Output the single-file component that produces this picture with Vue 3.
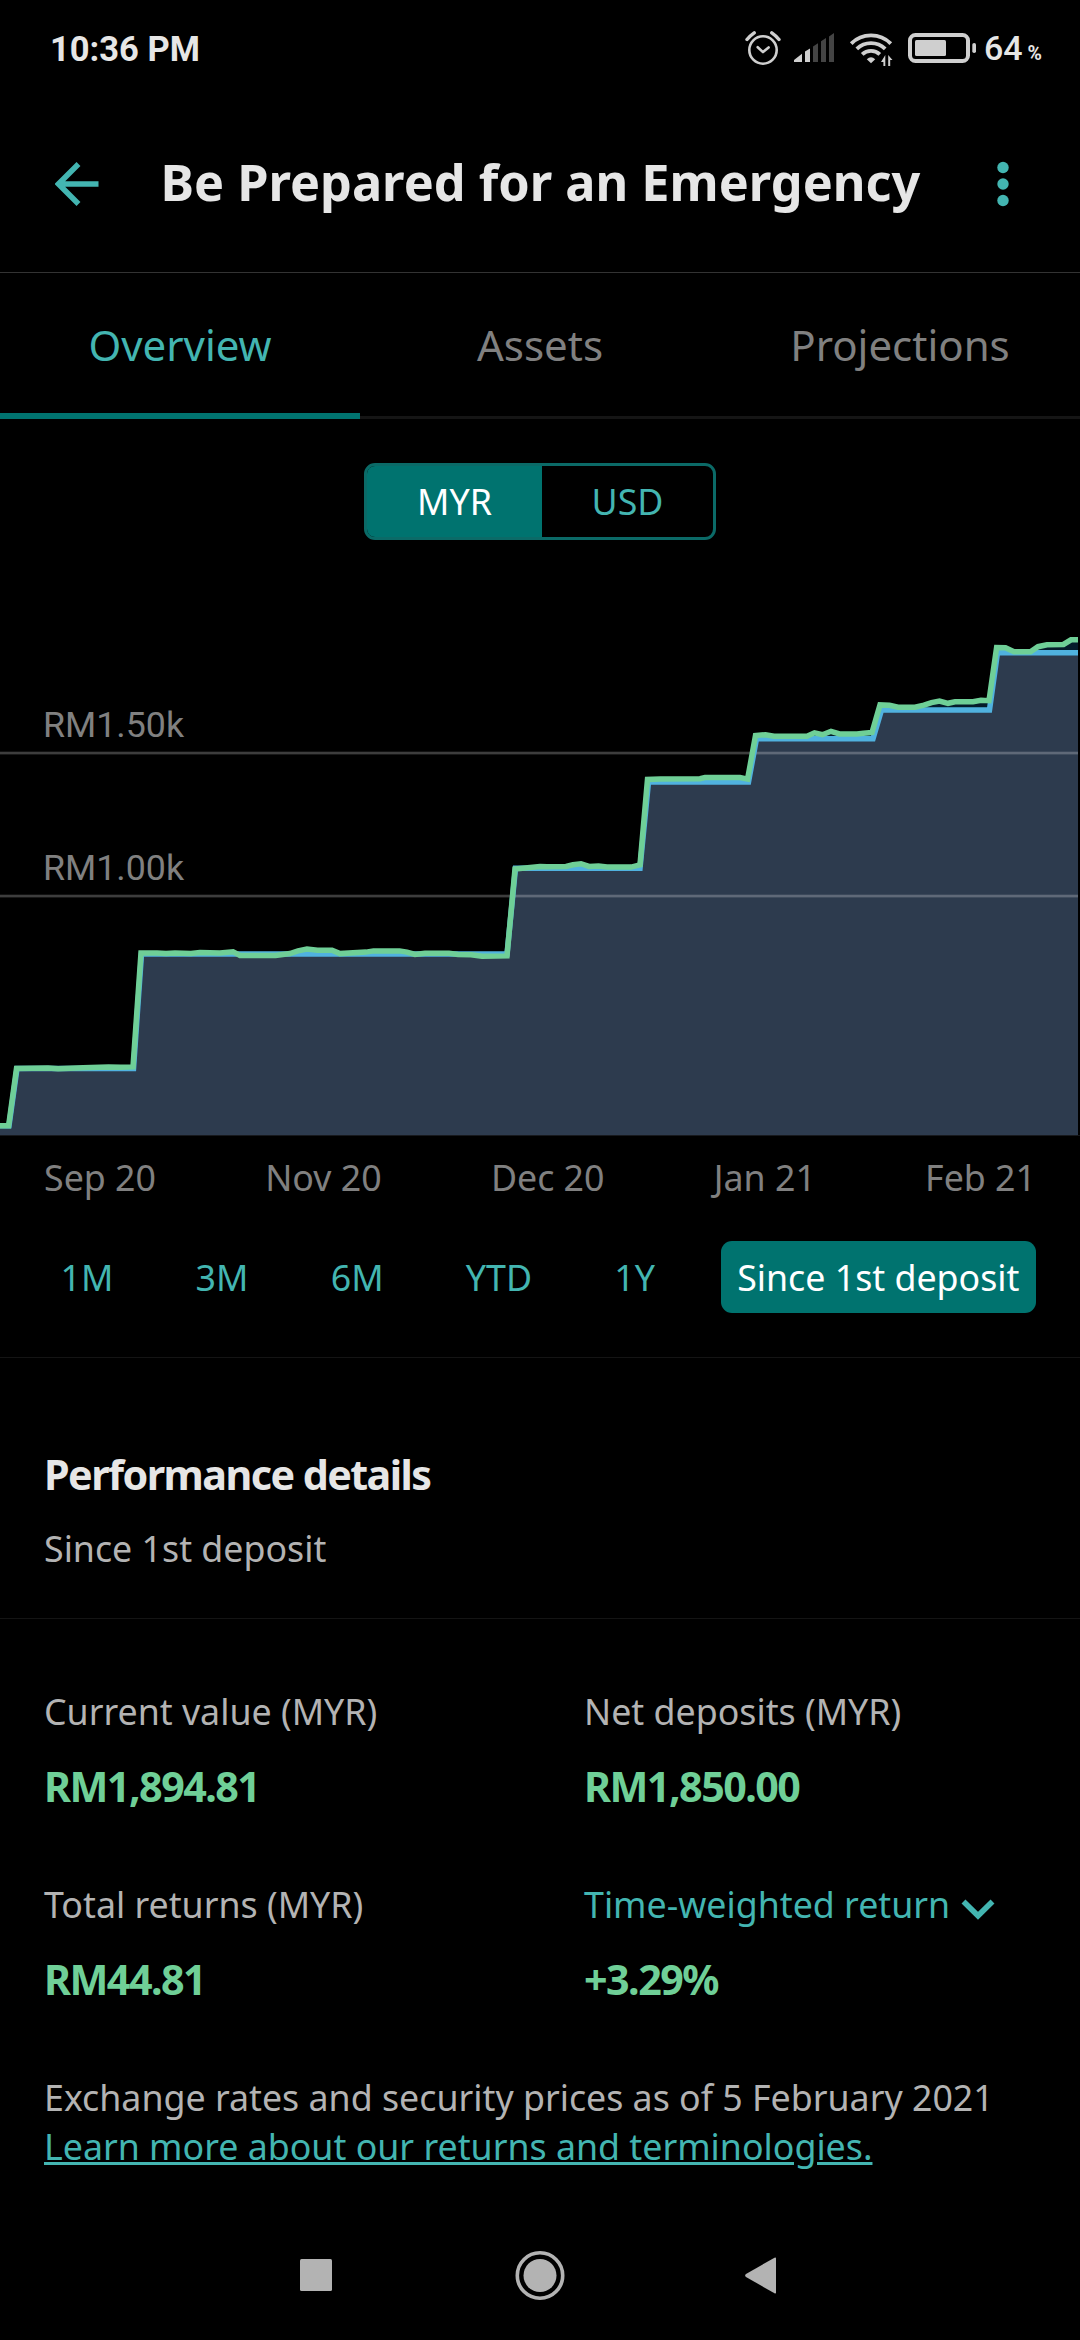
<script setup>
import { ref } from 'vue'

const tabs = ['Overview', 'Assets', 'Projections']
const activeTab = ref('Overview')
const currencies = ['MYR', 'USD']
const currency = ref('MYR')
const months = ['Sep 20', 'Nov 20', 'Dec 20', 'Jan 21', 'Feb 21']
const ranges = ['1M', '3M', '6M', 'YTD', '1Y', 'Since 1st deposit']
const range = ref('Since 1st deposit')

const stats = [
  { label: 'Current value (MYR)', value: 'RM1,894.81' },
  { label: 'Net deposits (MYR)', value: 'RM1,850.00' },
  { label: 'Total returns (MYR)', value: 'RM44.81' },
  { label: 'Time-weighted return', value: '+3.29%', expandable: true },
]

const gridLines = [
  { y: 153, label: 'RM1.50k' },
  { y: 296, label: 'RM1.00k' },
]

// Net deposits over time
const deposits =
  '0,525.8 9,525.8 17,468.5 133.5,468.5 141.5,354 507,354 515.5,268.3 640,268.3 648.5,182 748.5,182 756.5,138.7 873,138.7 881.5,110 989.5,110 997.5,52.7 1078,52.7'

// Portfolio value over time
const worth =
  '0,525.8 8.6,525.8 16.5,468.4 48,468 58,468.8 83,467.7 108.5,466.9 120.5,467.3 133,466.9 141,352.9 157,352.9 166,353.6 175,352.9 191,353.6 200,352.5 220,352.9 233,351.7 240,355.5 275.5,355.5 290,353.6 298,350.9 307,349 317.5,350.2 332,350.2 340,353.6 366,352.1 373.5,350.9 399.5,350.9 407,352.1 415,354.4 425,353.2 449,353.2 458,354.4 471,354.8 482,356.3 507,355.9 515,269 540,266.4 547,266.7 566,266.4 573,264.8 581,263.7 589,266.4 598.5,266 607,267.1 631,267.1 640,264.8 647.5,179.5 660.5,179.1 700,178.7 705,177.6 740,177.6 747.6,179.1 755.5,135.5 765.5,134.7 774,136.2 807,136.2 814.5,132.8 822.5,134.7 831,131.3 839.5,133.9 857,133.9 863.5,133.2 872,132.4 880,104.9 889.5,105.2 898,107.2 915,107.2 924,105.2 931.5,102.6 939.5,101 948,103.3 955,101.8 973,101.8 981,100.3 989,100.7 996.6,47.5 1005.5,47.8 1014,51.7 1030.5,51.7 1038,46.7 1047,44.8 1063.5,44.4 1071,39.8 1078,39.8'
</script>

<template>
  <div class="screen">
    <div class="status">
      <span class="clock">10:36 PM</span>
      <div class="status-right">
        <svg class="status-icons" width="240" height="40" viewBox="740 28 240 40">
          <g fill="none" stroke="#cfcfcf">
            <circle cx="762" cy="50" r="13.7" stroke-width="2.6" />
            <path d="M756.7 47.2l5.3 4.9 5.6-4.7" stroke-width="2.6" stroke-linecap="round" stroke-linejoin="round" />
            <path d="M746 39.5q3-3.8 7.2-6.7M778 39.5q-3-3.8-7.2-6.7" stroke-width="3.4" stroke-linecap="round" />
            <g stroke-width="3.8">
              <path d="M850.2 43.6a28 28 0 0 1 39.6 0" />
              <path d="M855.8 48.8a20.5 20.5 0 0 1 28.4 0" />
              <path d="M861.2 54.4a12.6 12.6 0 0 1 17.6 0" />
            </g>
            <rect x="909" y="35" width="58" height="26" rx="5.5" stroke-width="4" />
          </g>
          <g fill="#cfcfcf">
            <path d="M793 62v-2l8-6.300v8.300zM804 62V51.500l5-3V62z" />
            <path d="M865.800 59.300q4.200-4 8.400 0l-4.200 4z" />
            <path d="M884.300 55v11h-1.900v-4h-2.400zM887.200 66V55l4.300 5h-2.300v6z" />
            <rect x="914" y="40" width="31" height="16" rx="1.500" />
            <rect x="971.300" y="43" width="3.700" height="10" rx="1.800" />
          </g>
          <path d="M812 62V46.500l5-3.200V62zM820 62V41.200l5-3.200V62zM828 62V36.500l5-3.500V62z" fill="#444" />
        </svg>
        <span class="battery-level">64</span>
        <span class="battery-unit">%</span>
      </div>
    </div>

    <header class="header">
      <svg class="back" width="44" height="44" viewBox="0 0 44 44" fill="none" stroke="#43b5b1" stroke-width="5.500">
        <path d="M43.500 22H4M23.500 2L3.500 22l20 20" />
      </svg>
      <h1>Be Prepared for an Emergency</h1>
      <svg class="more" width="12" height="46" viewBox="0 0 12 46" fill="#43b5b1">
        <circle cx="6" cy="6.500" r="5.700" /><circle cx="6" cy="23" r="5.700" /><circle cx="6" cy="39.500" r="5.700" />
      </svg>
    </header>

    <nav class="tabs">
      <a v-for="t in tabs" :key="t" class="tab" :class="{ active: t === activeTab }" @click="activeTab = t">{{ t }}</a>
    </nav>

    <div class="toggle">
      <button v-for="c in currencies" :key="c" :class="{ active: c === currency }" @click="currency = c">{{ c }}</button>
    </div>

    <svg class="chart" width="1080" height="536" viewBox="0 0 1080 536">
      <polygon :points="`0,535 ${worth} 1078,535`" fill="#051c2b" />
      <polygon :points="`0,535 ${deposits} 1078,535`" fill="#2d3b4e" />
      <g v-for="g in gridLines" :key="g.label">
        <rect x="0" :y="g.y - 1.300" width="1078" height="2.700" fill="#fff" fill-opacity="0.240" />
        <text x="43" :y="g.y - 16.500">{{ g.label }}</text>
      </g>
      <rect x="0" y="535" width="1080" height="1" fill="#17191d" />
      <polyline :points="deposits" class="line deposits" />
      <polyline :points="worth" class="line worth" />
    </svg>

    <div class="months">
      <span v-for="m in months" :key="m">{{ m }}</span>
    </div>

    <div class="ranges">
      <button v-for="r in ranges" :key="r" :class="{ active: r === range }" @click="range = r">{{ r }}</button>
    </div>

    <section class="perf-head">
      <h2>Performance details</h2>
      <p>Since 1st deposit</p>
    </section>

    <section class="stats">
      <div v-for="s in stats" :key="s.label" class="stat">
        <div class="label" :class="{ link: s.expandable }">
          <span>{{ s.label }}</span>
          <svg v-if="s.expandable" width="34" height="22" viewBox="0 0 34 22" fill="none" stroke="#43b5b1" stroke-width="5.600">
            <path d="M2.500 2.500l14.500 14.300L31.500 2.500" />
          </svg>
        </div>
        <div class="value">{{ s.value }}</div>
      </div>
    </section>

    <footer class="note">
      <p>Exchange rates and security prices as of 5 February 2021</p>
      <a>Learn more about our returns and terminologies.</a>
    </footer>

    <div class="sysnav">
      <svg width="480" height="52" viewBox="300 2249 480 52" fill="#b3b3b3">
        <rect x="300" y="2259" width="32" height="32" rx="1.500" />
        <circle cx="540" cy="2275.500" r="16.500" />
        <circle cx="540" cy="2275.500" r="22.700" fill="none" stroke="#b3b3b3" stroke-width="3.600" />
        <path d="M776 2258.500v34q0 1.600-1.500.8l-28.500-16.300q-1.800-1.500 0-3l28.500-16.300q1.500-.8 1.500.8z" />
      </svg>
    </div>
  </div>
</template>

<style>
body {
  margin: 0;
  background: #000;
}
</style>

<style scoped>
.screen {
  width: 1080px;
  height: 2340px;
  overflow: hidden;
  background: #000;
  color: #b3b3b3;
  font-family: 'Noto Sans', sans-serif;
  font-size: 35.75px;
  display: flex;
  flex-direction: column;
}
.screen > * {
  flex-shrink: 0;
  box-sizing: border-box;
}
h1,
h2,
p {
  margin: 0;
}
button {
  border: 0;
  padding: 0;
  background: none;
  font: inherit;
  color: #43b5b1;
}

.status {
  height: 96px;
  padding: 0 38px 0 50px;
  display: flex;
  align-items: center;
  justify-content: space-between;
  font-family: Roboto, sans-serif;
  color: #e6e6e6;
}
.clock {
  font-size: 34.5px;
  font-weight: 700;
  line-height: 40px;
  padding-top: 2px;
}
.status-right {
  display: flex;
  align-items: baseline;
}
.status-icons {
  align-self: center;
}
.battery-level {
  font-size: 34px;
  font-weight: 500;
  margin-left: 3px;
}
.battery-unit {
  font-size: 19.5px;
  font-weight: 700;
  margin-left: 5px;
}

.header {
  height: 177px;
  padding: 0 71px 0 55px;
  border-bottom: 1px solid #333;
  display: flex;
  align-items: center;
}
.header h1 {
  flex: 1;
  margin-left: 61.5px;
  padding-bottom: 4px;
  font-size: 50.4px;
  font-weight: 700;
  line-height: 68px;
  color: #e6e6e6;
  white-space: nowrap;
}

.tabs {
  height: 146px;
  display: grid;
  grid-template-columns: repeat(3, 1fr);
}
.tab {
  box-sizing: border-box;
  height: 146px;
  line-height: 143px;
  text-align: center;
  font-size: 42px;
  color: #808080;
  box-shadow: inset 0 -3px #151515;
}
.tab.active {
  color: #43b5b1;
  box-shadow: inset 0 -6px #00736f;
}

.toggle {
  width: 352px;
  height: 77px;
  margin: 44px 0 0 364px;
  border: 3px solid #0b6a67;
  border-radius: 11px;
  overflow: hidden;
  display: grid;
  grid-template-columns: 175px 1fr;
}
.toggle button {
  padding-bottom: 2px;
}
.toggle .active {
  background: #00736f;
  color: #fff;
}

.chart {
  display: block;
  margin-top: 60px;
}
.chart text {
  font-family: Roboto, sans-serif;
  font-size: 35.75px;
  fill: #808080;
}
.line {
  fill: none;
  stroke-width: 5.500;
}
.deposits {
  stroke: #50b2df;
}
.worth {
  stroke: #6fcf97;
}

.months {
  margin-top: 17px;
  padding: 0 44px;
  display: flex;
  justify-content: space-between;
  line-height: 48px;
  color: #808080;
}

.ranges {
  height: 72px;
  margin-top: 40px;
  padding: 0 44px;
  display: flex;
  justify-content: space-between;
}
.ranges button {
  padding: 0 16.500px 1px;
  border-radius: 11px;
}
.ranges .active {
  background: #00736f;
  color: #fff;
}

.perf-head {
  margin-top: 44px;
  height: 262px;
  padding: 88px 44px 0;
  border-top: 1px solid #141414;
  border-bottom: 1px solid #141414;
}
.perf-head h2 {
  font-size: 41.25px;
  font-weight: 700;
  letter-spacing: -1.550px;
  line-height: 56px;
  color: #e6e6e6;
}
.perf-head p {
  margin-top: 22px;
  line-height: 48px;
}

.stats {
  padding: 68px 0 0 44px;
  display: grid;
  grid-template-columns: 540px 1fr;
  row-gap: 66px;
}
.label {
  display: flex;
  align-items: center;
  line-height: 48px;
}
.label.link {
  color: #43b5b1;
}
.label svg {
  margin: 11px 0 0 11px;
}
.value {
  margin-top: 23px;
  line-height: 56px;
  font-size: 41.25px;
  font-weight: 700;
  letter-spacing: -1.550px;
  color: #6fcf97;
}

.note {
  margin-top: 66px;
  padding: 0 44px;
  line-height: 49px;
}
.note a {
  display: block;
  color: #43b5b1;
  text-decoration: underline;
}

.sysnav {
  margin-top: auto;
  height: 91px;
  display: flex;
  justify-content: center;
}
</style>
